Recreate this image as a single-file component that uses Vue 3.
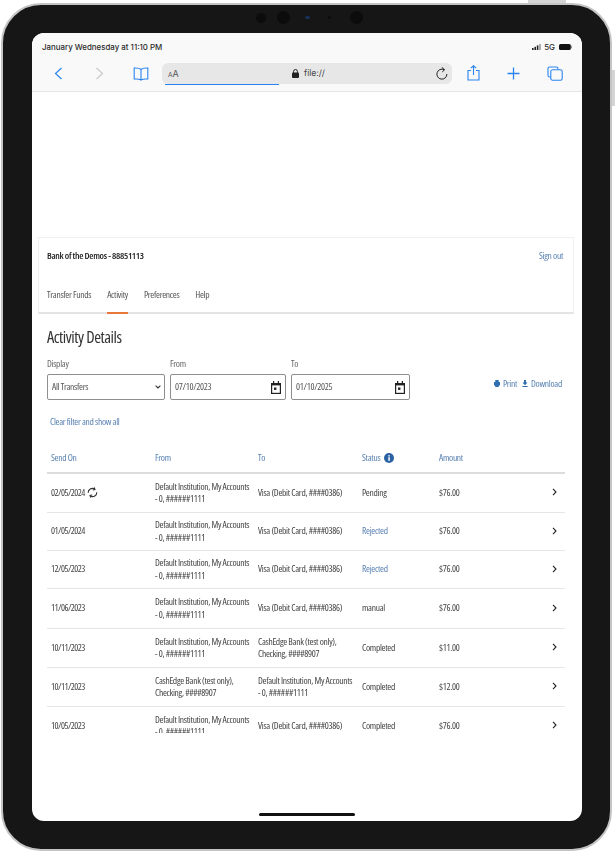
<script setup>
const rows = [
  { date: '02/05/2024', recurring: true, from: 'Default Institution, My Accounts - 0, ######1111', to: 'Visa (Debit Card, ####0386)', status: 'Pending', amount: '$76.00' },
  { date: '01/05/2024', from: 'Default Institution, My Accounts - 0, ######1111', to: 'Visa (Debit Card, ####0386)', status: 'Rejected', amount: '$76.00' },
  { date: '12/05/2023', from: 'Default Institution, My Accounts - 0, ######1111', to: 'Visa (Debit Card, ####0386)', status: 'Rejected', amount: '$76.00' },
  { date: '11/06/2023', from: 'Default Institution, My Accounts - 0, ######1111', to: 'Visa (Debit Card, ####0386)', status: 'manual', amount: '$76.00' },
  { date: '10/11/2023', from: 'Default Institution, My Accounts - 0, ######1111', to: 'CashEdge Bank (test only), Checking, ####8907', status: 'Completed', amount: '$11.00' },
  { date: '10/11/2023', from: 'CashEdge Bank (test only), Checking, ####8907', to: 'Default Institution, My Accounts - 0, ######1111', status: 'Completed', amount: '$12.00' },
  { date: '10/05/2023', from: 'Default Institution, My Accounts - 0, ######1111', to: 'Visa (Debit Card, ####0386)', status: 'Completed', amount: '$76.00' }
]
const tabs = ['Transfer Funds', 'Activity', 'Preferences', 'Help']
</script>

<template>
  <div class="page">
    <div class="device">
      <i class="side-btn top-btn"></i>
      <i class="side-btn right-btn"></i>
      <div class="camera">
        <i class="lens small"></i>
        <i class="lens"></i>
        <i class="lens blue"></i>
        <i class="lens tiny"></i>
        <i class="lens"></i>
      </div>

      <div class="screen">
        <div class="status-bar">
          <span>January Wednesday at 11:10 PM</span>
          <div class="status-right">
            <svg class="signal" width="9" height="6" viewBox="0 0 9 6"><rect x="0" y="4" width="1.6" height="2" fill="#222"/><rect x="2.4" y="2.8" width="1.6" height="3.2" fill="#222"/><rect x="4.8" y="1.4" width="1.6" height="4.6" fill="#222"/><rect x="7.2" y="0" width="1.6" height="6" fill="#999"/></svg>
            <span>5G</span>
            <svg width="13" height="6" viewBox="0 0 13 6"><rect x="0" y="0" width="11.8" height="6" rx="1.6" fill="#111"/><rect x="12.2" y="1.8" width=".8" height="2.4" fill="#777"/></svg>
          </div>
        </div>

        <div class="toolbar">
          <svg class="tb-back" width="9" height="13" viewBox="0 0 9 13" fill="none" stroke="#2a84f0" stroke-width="1.2"><path d="M7.5 1 L1.5 6.5 L7.5 12"/></svg>
          <svg class="tb-fwd" width="9" height="13" viewBox="0 0 9 13" fill="none" stroke="#c9c9c9" stroke-width="1.2"><path d="M1.5 1 L7.5 6.5 L1.5 12"/></svg>
          <svg class="tb-book" width="16" height="14" viewBox="0 0 16 14" fill="none" stroke="#2a84f0" stroke-width="1.1"><path d="M8 2.5 C6.5 1 4 .8 1.2 1 V12 C4 11.8 6.5 12 8 13 C9.5 12 12 11.8 14.8 12 V1 C12 .8 9.5 1 8 2.5 Z M8 2.5 V13"/></svg>
          <div class="url">
            <span class="aa"><small>A</small>A</span>
            <i class="url-line"></i>
            <svg class="lock" width="7" height="9" viewBox="0 0 7 9"><rect x="0" y="3.6" width="7" height="5.4" rx="1" fill="#222"/><path d="M1.6 4 V2.4 a1.9 1.9 0 0 1 3.8 0 V4" fill="none" stroke="#222" stroke-width="1"/></svg>
            <span class="url-text">file://</span>
            <svg class="reload" width="12" height="13" viewBox="0 0 12 13" fill="none" stroke="#222" stroke-width="1"><path d="M8.2 2.7 A5 5 0 1 0 10.9 7"/><path d="M5.8 .4 L8.6 2.7 L6.2 5"/></svg>
          </div>
          <svg class="tb-share" width="13" height="16" viewBox="0 0 13 16" fill="none" stroke="#2a84f0" stroke-width="1.1"><path d="M4 5.5 H1 V15 H12 V5.5 H9"/><path d="M6.5 10 V.8 M3.8 3.2 L6.5 .8 L9.2 3.2"/></svg>
          <svg class="tb-plus" width="13" height="13" viewBox="0 0 13 13" fill="none" stroke="#2a84f0" stroke-width="1.3"><path d="M6.5 .5 V12.5 M.5 6.5 H12.5"/></svg>
          <svg class="tb-tabs" width="16" height="15" viewBox="0 0 16 15" fill="none" stroke="#2a84f0" stroke-width="1.1"><path d="M3.6 11 H2.6 A1.6 1.6 0 0 1 1 9.4 V2.6 A1.6 1.6 0 0 1 2.6 1 H9.4 A1.6 1.6 0 0 1 11 2.6 V3.6"/><rect x="3.8" y="3.8" width="11.4" height="10.4" rx="1.8"/></svg>
        </div>

        <div class="content">
          <div class="app-card">
            <div class="app-top">
              <b>Bank of the Demos - 88851113</b>
              <a>Sign out</a>
            </div>
            <nav class="tabs">
              <span v-for="tab in tabs" :key="tab" class="tab" :class="{ active: tab === 'Activity' }">{{ tab }}</span>
            </nav>
          </div>

          <div class="main">
            <h1>Activity Details</h1>
            <div class="filters">
              <label class="field f-display">
                <span>Display</span>
                <div class="input">All Transfers
                  <svg class="caret" width="6" height="4" viewBox="0 0 6 4" fill="none" stroke="#333" stroke-width="1.1"><path d="M.6 .6 L3 3 L5.4 .6"/></svg>
                </div>
              </label>
              <label class="field f-from">
                <span>From</span>
                <div class="input">07/10/2023
                  <svg class="cal" width="10" height="13" viewBox="0 0 10 13"><path d="M0 2 H2 V0 H3.2 V2 H6.8 V0 H8 V2 H10 V13 H0 Z" fill="#222"/><rect x="1.2" y="4.4" width="7.6" height="7.4" fill="#fff"/><rect x="3" y="6.5" width="2.4" height="2.4" fill="#222"/></svg>
                </div>
              </label>
              <label class="field f-to">
                <span>To</span>
                <div class="input">01/10/2025
                  <svg class="cal" width="10" height="13" viewBox="0 0 10 13"><path d="M0 2 H2 V0 H3.2 V2 H6.8 V0 H8 V2 H10 V13 H0 Z" fill="#222"/><rect x="1.2" y="4.4" width="7.6" height="7.4" fill="#fff"/><rect x="3" y="6.5" width="2.4" height="2.4" fill="#222"/></svg>
                </div>
              </label>
              <div class="actions">
                <a><svg width="6" height="7" viewBox="0 0 6 7"><path d="M1.3 0 H4.7 V2 H6 V5.4 H4.8 V7 H1.2 V5.4 H0 V2 H1.3 Z" fill="#2f6fb0"/></svg>Print</a>
                <a><svg width="6" height="7" viewBox="0 0 6 7"><path d="M2 0 H4 V2.6 H5.6 L3 5.2 L.4 2.6 H2 Z M.4 6 H5.6 V7 H.4 Z" fill="#2f6fb0"/></svg>Download</a>
              </div>
            </div>
            <a class="clear">Clear filter and show all</a>

            <div class="table">
              <div class="row head">
                <span>Send On</span>
                <span>From</span>
                <span>To</span>
                <span class="status-head">Status
                  <svg width="10" height="10" viewBox="0 0 10 10"><circle cx="5" cy="5" r="5" fill="#2b62a4"/><rect x="4.3" y="4.2" width="1.5" height="3.6" fill="#fff"/><rect x="4.3" y="2.2" width="1.5" height="1.3" fill="#fff"/></svg>
                </span>
                <span>Amount</span>
                <span></span>
              </div>
              <div v-for="(row, i) in rows" :key="i" class="row">
                <span class="c-date">{{ row.date }}
                  <svg v-if="row.recurring" class="sync" width="11" height="11" viewBox="0 0 11 11" fill="none" stroke="#333" stroke-width="1.1"><path d="M1.2 5.8 A4.2 4.2 0 0 1 7.6 2"/><path d="M9.8 5.2 A4.2 4.2 0 0 1 3.4 9"/><path d="M7.2 .4 L8 2.6 L5.8 3" /><path d="M3.8 10.6 L3 8.4 L5.2 8"/></svg>
                </span>
                <span class="wrap">{{ row.from }}</span>
                <span class="wrap">{{ row.to }}</span>
                <span :class="{ rejected: row.status === 'Rejected' }">{{ row.status }}</span>
                <span>{{ row.amount }}</span>
                <svg class="chev" width="5" height="8" viewBox="0 0 5 8" fill="none" stroke="#222" stroke-width="1.1"><path d="M1 .8 L4 4 L1 7.2"/></svg>
              </div>
            </div>
          </div>
        </div>
        <i class="home-bar"></i>
      </div>
    </div>
  </div>
</template>

<style>
html, body { margin: 0; background: #fff; }
</style>

<style scoped>
.page {
  width: 615px;
  height: 852px;
  padding: 3px 3px 1px 1px;
  box-sizing: border-box;
  background: #fff;
  overflow: hidden;
}

.device {
  position: relative;
  height: 100%;
  box-sizing: border-box;
  padding: 28px 28px 28px 29px;
  background: #161616;
  border: 2px solid #c4c4c4;
  border-radius: 40px;
}

.side-btn { position: absolute; background: #d4d4d4; }
.top-btn { top: -5px; right: 44px; width: 38px; height: 3px; }
.right-btn { top: 65px; right: -5px; width: 3px; height: 36px; }

.camera {
  position: absolute;
  top: 6px;
  left: 253px;
  display: flex;
  align-items: center;
  gap: 10px;
  height: 13px;
}
.lens { width: 13px; height: 13px; border-radius: 50%; background: #0c0c0c; margin-right: 1px; }
.lens.small { width: 10px; height: 10px; }
.lens.blue { width: 5px; height: 3px; background: #16345e; margin: 0 8px 0 4px; }
.lens.tiny { width: 3px; height: 3px; margin-right: 9px; }

.screen {
  position: relative;
  height: 100%;
  background: #fff;
  border-radius: 12px;
  overflow: hidden;
  font-family: "Open Sans", sans-serif;
  color: #444;
}

.status-bar {
  height: 27px;
  padding: 0 10px 0 10px;
  display: flex;
  align-items: center;
  justify-content: space-between;
  background: #f9f9f9;
  font-family: Inter, sans-serif;
  font-size: 7.9px;
  font-weight: 500;
  color: #2b2b2b;
}
.status-right { display: flex; align-items: center; gap: 4px; }
.signal { margin-right: -1px; }

.toolbar {
  position: relative;
  height: 31px;
  background: #f9f9f9;
  border-bottom: 1px solid #e6e6e6;
}
.toolbar > svg { position: absolute; }
.tb-back { left: 22px; top: 7px; }
.tb-fwd { left: 63px; top: 7px; }
.tb-book { left: 101px; top: 7px; }
.tb-share { left: 435px; top: 5px; }
.tb-plus { left: 475px; top: 7px; }
.tb-tabs { left: 515px; top: 6px; }

.url {
  position: absolute;
  left: 130px;
  top: 3px;
  width: 290px;
  height: 21px;
  border-radius: 6px;
  background: #e7e7e7;
}
.url > * { position: absolute; }
.aa { left: 6px; top: 5px; font-family: Inter, sans-serif; font-size: 9px; line-height: 12px; color: #555; }
.aa small { font-size: 6.5px; }
.url-line { left: 3px; bottom: -1px; width: 114px; height: 1px; background: #2a84f0; }
.lock { left: 130px; top: 6px; }
.url-text { left: 142px; top: 4px; font-family: Inter, sans-serif; font-size: 8.5px; line-height: 13px; color: #444; }
.reload { right: 4px; top: 4px; }

.content { padding: 145px 8px 0 6px; filter: blur(.3px); }

.app-card {
  height: 77px;
  box-sizing: border-box;
  padding: 0 10px 0 8px;
  border: 1px solid #f0f0f0;
  border-bottom: 2px solid #e4e4e4;
  font-stretch: 75%;
  letter-spacing: -.3px;
}
.app-top {
  display: flex;
  justify-content: space-between;
  align-items: center;
  height: 35px;
  font-size: 9.5px;
}
.app-top b { font-weight: 600; color: #222; }
.app-top a { color: #5a82b2; }

.tabs { display: flex; gap: 16px; margin-top: 2px; height: 39px; font-size: 9.5px; }
.tab { padding-top: 12px; line-height: 15px; color: #555; box-sizing: border-box; }
.tab.active { border-bottom: 2px solid #e8773a; }

.main { padding: 0 9px; font-size: 9.5px; font-stretch: 75%; letter-spacing: -.3px; }

h1 {
  margin: 11px 0 0;
  font-size: 16.5px;
  line-height: 23px;
  font-weight: 400;
  letter-spacing: -.45px;
  color: #333;
}

.filters { display: flex; align-items: flex-end; gap: 5px; margin-top: 9px; }
.field { display: block; }
.field > span { display: block; height: 17px; line-height: 13px; color: #666; }
.f-display { width: 118px; }
.f-from { width: 116px; }
.f-to { width: 119px; }
.input {
  position: relative;
  height: 26px;
  box-sizing: border-box;
  padding-left: 4px;
  line-height: 24px;
  border: 1px solid #8e8e8e;
  border-radius: 2px;
  color: #555;
}
.caret { position: absolute; right: 3px; top: 10px; }
.cal { position: absolute; right: 4px; top: 6px; }

.actions {
  display: flex;
  gap: 5px;
  margin-left: auto;
  height: 26px;
  margin-right: 3px;
  line-height: 20px;
  color: #5a82b2;
}
.actions svg { margin-right: 3px; }

.clear { display: block; margin: 14px 0 0 3px; line-height: 15px; color: #5a82b2; }

.table { margin-top: 17px; height: 287px; overflow: hidden; }

.row {
  display: grid;
  grid-template-columns: 104px 103px 104px 77px 1fr 11px;
  align-items: center;
  height: 39px;
  box-sizing: border-box;
  padding: 0 8px 0 4px;
  border-bottom: 1px solid #e6e6e6;
  line-height: 12.5px;
}
.row:nth-child(3), .row:nth-child(4) { height: 38px; }
.row:nth-child(5) { height: 40px; }
.row.head {
  height: 28px;
  padding-bottom: 2px;
  border-bottom: 2px solid #dcdcdc;
  color: #5a82b2;
}
.wrap { max-width: 97px; }
.status-head { display: flex; align-items: center; gap: 4px; }
.c-date { letter-spacing: -.55px; }
.sync { vertical-align: -2px; margin-left: 1px; }
.rejected { color: #5a82b2; }
.chev { justify-self: end; margin-top: -2px; }

.home-bar {
  position: absolute;
  left: 227px;
  bottom: 5px;
  width: 96px;
  height: 3px;
  border-radius: 2px;
  background: #111;
}
</style>
